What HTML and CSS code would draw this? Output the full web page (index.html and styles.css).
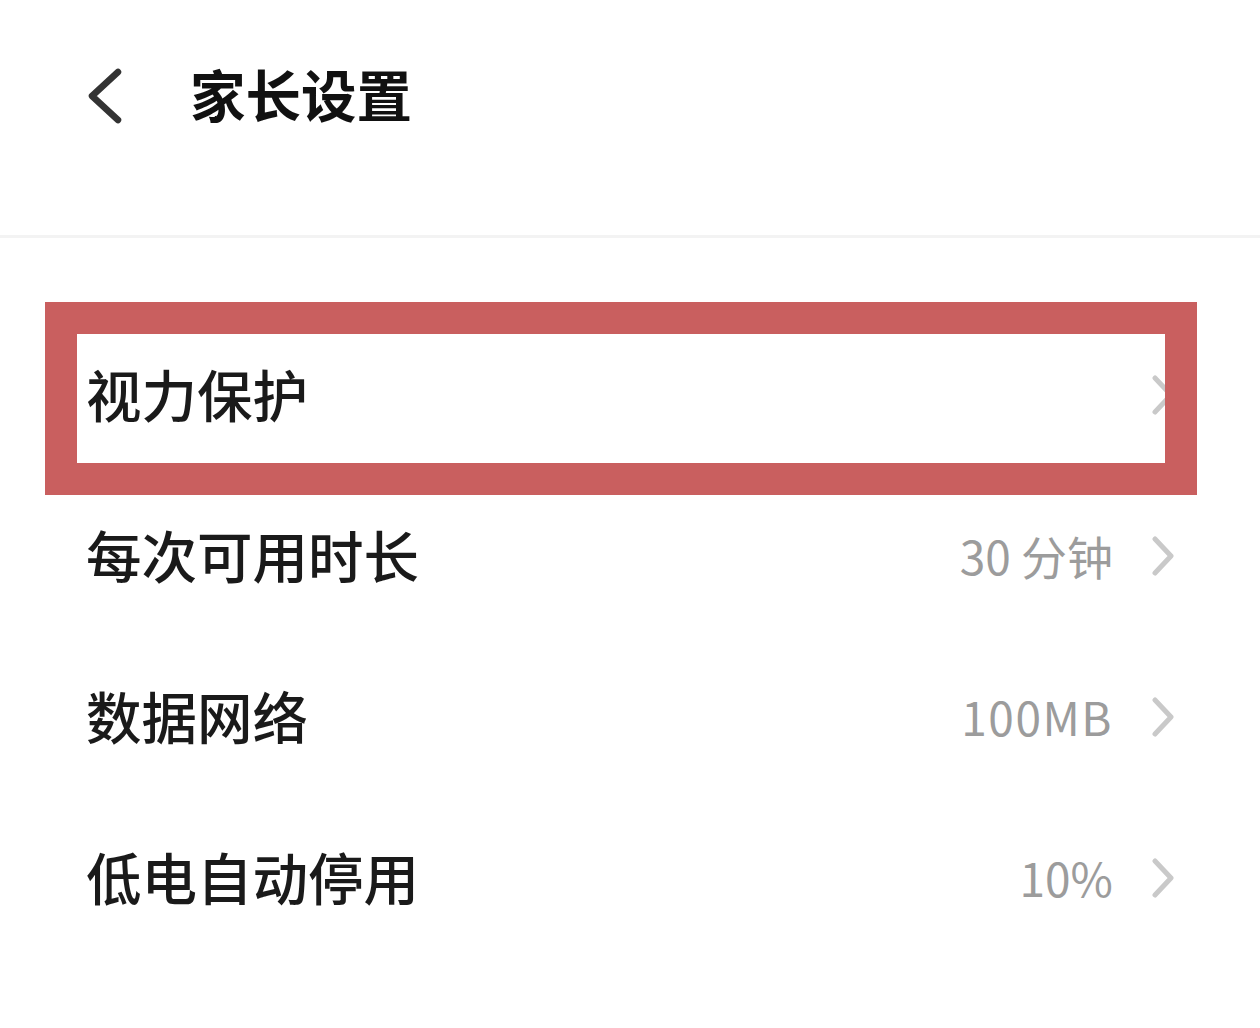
FILE: index.html
```html
<!DOCTYPE html>
<html lang="zh-CN">
    <head>
        <meta charset="utf-8">
        <title>家长设置</title>
        <link rel="stylesheet" href="styles.css">
    </head>
    <body>
        <header class="topbar">
            <svg class="back" width="40" height="60" viewBox="0 0 40 60">
                <polyline points="32,7 6,31 32,55" />
            </svg>
            <h1 class="title">家长设置</h1>
        </header>

        <!-- Settings list -->
        <ul class="settings">
            <li class="row">
                <span class="label">视力保护</span>
                <span class="right">
                    <svg class="chev" width="24" height="40" viewBox="0 0 24 40"><polyline points="4,3 20,20 4,37" /></svg>
                </span>
            </li>
            <li class="row">
                <span class="label">每次可用时长</span>
                <span class="right">
                    <span class="value">30 分钟</span>
                    <svg class="chev" width="24" height="40" viewBox="0 0 24 40"><polyline points="4,3 20,20 4,37" /></svg>
                </span>
            </li>
            <li class="row">
                <span class="label">数据网络</span>
                <span class="right">
                    <span class="value wide">100MB</span>
                    <svg class="chev" width="24" height="40" viewBox="0 0 24 40"><polyline points="4,3 20,20 4,37" /></svg>
                </span>
            </li>
            <li class="row">
                <span class="label">低电自动停用</span>
                <span class="right">
                    <span class="value">10%</span>
                    <svg class="chev" width="24" height="40" viewBox="0 0 24 40"><polyline points="4,3 20,20 4,37" /></svg>
                </span>
            </li>
        </ul>

        <!-- Highlight frame drawn over the first row -->
        <div class="highlight"></div>
    </body>
</html>
```

FILE: styles.css
```css
/* Page */
body {
    margin: 0;
    background-color: #fff;
    font-family: "Noto Sans CJK SC", "Noto Sans", sans-serif;
    color: #1a1a1a;
    position: relative;
    width: 1260px;
    min-height: 1028px;
    overflow: hidden;
}

/* Top bar */
.topbar {
    height: 172px;
    border-bottom: 3px solid #f3f3f3;
    display: flex;
    align-items: flex-start;
    padding: 63px 0 0 86px;
}

.back {
    margin-top: 2px;
}

.back polyline {
    fill: none;
    stroke: #333;
    stroke-width: 6.5;
    stroke-linecap: round;
    stroke-linejoin: round;
}

.title {
    margin: 0 0 0 64px;
    font-size: 55.5px;
    font-weight: 700;
    line-height: 60px;
    color: #111;
}

/* Settings rows */
.settings {
    list-style: none;
    margin: 0;
    padding: 75px 0 0;
}

.row {
    height: 161px;
    display: flex;
    align-items: center;
    justify-content: space-between;
    padding: 0 85px 0 86px;
}

.label {
    font-size: 55.5px;
    font-weight: 500;
    line-height: 1;
}

.right {
    display: flex;
    align-items: center;
    gap: 38px;
}

.value {
    font-size: 46px;
    color: #9c9c9c;
    line-height: 1;
}

.value.wide {
    letter-spacing: 1.5px;
}

.chev {
    margin-top: 3px;
}

.chev polyline {
    fill: none;
    stroke: #c9c9c9;
    stroke-width: 5;
    stroke-linecap: round;
    stroke-linejoin: round;
}

/* Annotation frame */
.highlight {
    position: absolute;
    left: 45px;
    top: 302px;
    width: 1152px;
    height: 193px;
    box-sizing: border-box;
    border: 32px solid #c95f5f;
}
```
